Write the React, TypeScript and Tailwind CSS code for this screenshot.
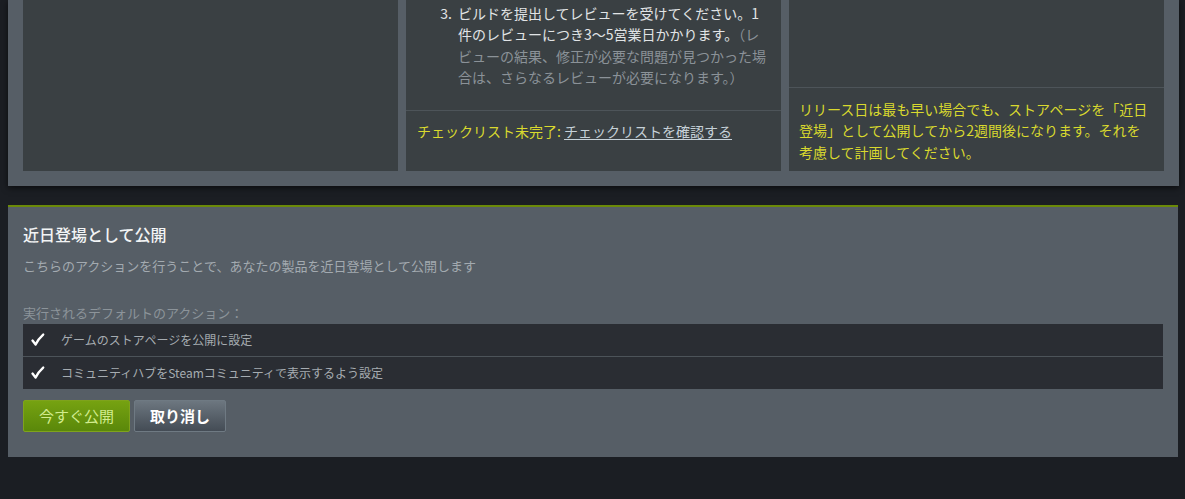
import React from "react";

const jp = "font-['Noto_Sans_CJK_JP','Noto_Sans',sans-serif]";

const Check = () => (
  <svg width="16" height="16" viewBox="0 0 16 16" className="shrink-0">
    <path
      d="M2.5 8.6 L5.6 12.6 C7.6 8.4 10 5.4 13.2 2.6"
      fill="none"
      stroke="#ffffff"
      strokeWidth="2.4"
      strokeLinecap="round"
      strokeLinejoin="round"
    />
  </svg>
);

const Row = ({ text, last }: { text: string; last?: boolean }) => (
  <div
    className={`flex items-center h-[32px] bg-[#2a2d33] pl-[7px] ${
      last ? "" : "border-b border-[#4c5359] h-[33px]"
    }`}
  >
    <Check />
    <span className="ml-[15px] text-[12px] text-[#a6acb1]">{text}</span>
  </div>
);

const App = () => {
  return (
    <div className={`bg-[#1b1e23] min-h-[499px] w-full ${jp}`}>
      {/* checklist panel, top cut off */}
      <div className="mx-[8px] w-[1171px] bg-[#565e66] px-[15px] pb-[15px] shadow-[0_2px_6px_rgba(0,0,0,0.6)]">
        <div className="grid grid-cols-3 gap-2 h-[171px]">
          <div className="bg-[#3a4043]" />

          <div className="bg-[#3a4043] flex flex-col">
            <div className="flex-1 pt-[3px] pl-[28px] pr-[10px]">
              <div className="flex text-[14px] leading-[21.3px]">
                <span className="w-[18px] text-right text-[#e1e4e6] shrink-0">3.</span>
                <p className="ml-[6px] text-[#e1e4e6]">
                  ビルドを提出してレビューを受けてください。1
                  <br />
                  件のレビューにつき3〜5営業日かかります。
                  <span className="text-[#8b9298]">
                    （レ
                    <br />
                    ビューの結果、修正が必要な問題が見つかった場
                    <br />
                    合は、さらなるレビューが必要になります。）
                  </span>
                </p>
              </div>
            </div>
            <div className="border-t border-[#4d5459] pt-[10px] pb-[29px] pl-[11px] text-[14px] leading-[21px]">
              <span className="text-[#d9d92e]">チェックリスト未完了: </span>
              <span className="text-[#c6d1d8] underline underline-offset-2">
                チェックリストを確認する
              </span>
            </div>
          </div>

          <div className="bg-[#3a4043] flex flex-col">
            <div className="flex-1" />
            <div className="border-t border-[#4d5459] pt-[11px] pb-[8px] pl-[10px] text-[14px] leading-[21.5px] text-[#d9d92e]">
              リリース日は最も早い場合でも、ストアページを「近日
              <br />
              登場」として公開してから2週間後になります。それを
              <br />
              考慮して計画してください。
            </div>
          </div>
        </div>
      </div>

      {/* publish panel */}
      <div className="mt-[19px] mx-[8px] w-[1170px] border-t-2 border-[#6b8a08] bg-[#565e66] px-[15px] pt-[16px] pb-[25px]">
        <h2 className="text-[16px] leading-[22px] font-medium text-[#f2f4f5]">
          近日登場として公開
        </h2>
        <p className="mt-[11px] text-[13px] leading-[19px] text-[#a3aab0]">
          こちらのアクションを行うことで、あなたの製品を近日登場として公開します
        </p>
        <p className="mt-[28px] text-[13px] leading-[19px] text-[#8c949a]">
          実行されるデフォルトのアクション：
        </p>
        <div className="mt-[2px]">
          <Row text="ゲームのストアページを公開に設定" />
          <Row text="コミュニティハブをSteamコミュニティで表示するよう設定" last />
        </div>
        <div className="mt-[11px] flex gap-[4px]">
          <button className="h-[32px] w-[107px] rounded-[2px] border border-[#7fa31c] bg-gradient-to-b from-[#76a211] to-[#5a880a] text-[15px] text-[#d2ec8e]">
            今すぐ公開
          </button>
          <button className="h-[32px] w-[92px] rounded-[2px] border border-[#6f7a83] bg-gradient-to-b from-[#6d7780] to-[#444c55] text-[15px] font-bold text-white">
            取り消し
          </button>
        </div>
      </div>
    </div>
  );
};

export default App;
